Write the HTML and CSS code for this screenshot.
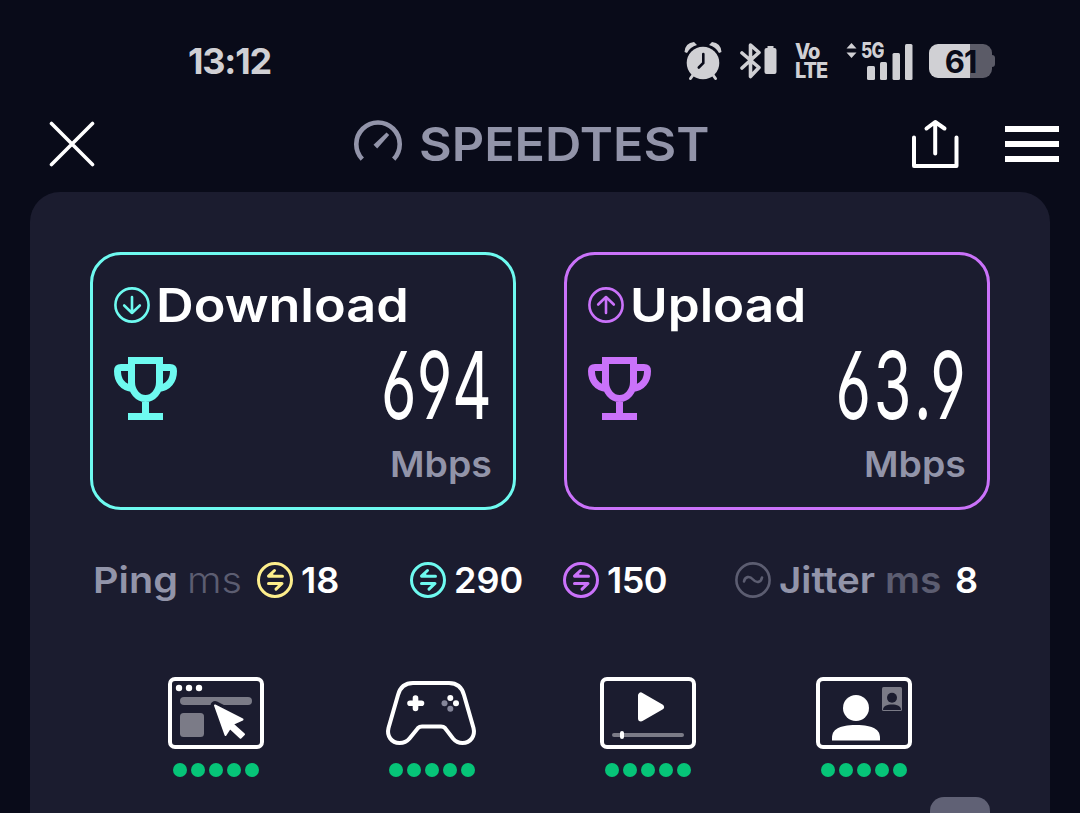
FILE: index.html
```
<!DOCTYPE html>
<html lang="en">
<head>
    <meta charset="UTF-8">
    <meta name="viewport" content="width=device-width, initial-scale=1.0">
    <title>Speedtest</title>
    <link rel="stylesheet" href="styles.css">
</head>
<body>
    <!-- shared icons -->
    <svg class="defs" width="0" height="0">
        <symbol id="trophy" viewBox="0 0 63 63">
            <path fill="none" stroke="currentColor" stroke-width="7" d="M17.500 3.500h28V25a14 16.500 0 0 1-28 0zM17.500 10.500H7c-2.500 0-3.500 1-3.500 3.500 0 9.500 5 16 14.500 17.500M45.500 10.500H56c2.500 0 3.500 1 3.500 3.500 0 9.500-5 16-14.500 17.500M31.500 41v16M14 59.500h35"/>
        </symbol>
        <symbol id="latency" viewBox="0 0 36 36">
            <g fill="none" stroke="currentColor" stroke-width="3" stroke-linecap="round" stroke-linejoin="round">
                <circle cx="18" cy="18" r="16.500"/>
                <path d="M17.500 8.500l-6 5.700h14M11.500 21.500H25l-6 5.700"/>
                <path d="M15 12l-2.500 2h4zM22 24l2.500-2.300h-4z" stroke-width="1.500"/>
            </g>
        </symbol>
    </svg>

    <div class="status-bar">
        <div class="time"><span>13:12</span></div>
        <svg class="alarm" width="38" height="40" viewBox="0 0 38 40">
            <circle cx="19" cy="22" r="16.300" fill="#d0d0d4"/>
            <path d="M0.500 11Q1 2 10 1l3 3Q6 6 3 12zM37.500 11Q37 2 28 1l-3 3Q32 6 35 12z" fill="#d0d0d4"/>
            <path d="M9 34l-2.500 3.500M29 34l2.500 3.500" stroke="#d0d0d4" stroke-width="3" stroke-linecap="round"/>
            <path d="M19.300 13v9l-4.500 4.500" stroke="#090b19" stroke-width="2.600" stroke-linecap="round" fill="none"/>
        </svg>
        <svg class="bluetooth" width="38" height="38" viewBox="0 0 38 38">
            <path d="M2 11l17 14.500-8.500 9V3l8.500 7.500L2 26" stroke="#d0d0d4" stroke-width="3.600" stroke-linejoin="round" stroke-linecap="round" fill="none"/>
            <path d="M27.500 4h6v2h1a2 2 0 0 1 2 2v22a2 2 0 0 1-2 2h-8a2 2 0 0 1-2-2V8a2 2 0 0 1 2-2h1z" fill="#d0d0d4"/>
        </svg>
        <div class="volte"><span>Vo</span><span>LTE</span></div>
        <div class="signal">
            <svg width="68" height="38" viewBox="0 0 68 38" fill="#d0d0d4">
                <path d="M5.500 1l5 5.500h-10zM5.500 16l5-5.500h-10z"/>
                <rect x="21" y="24" width="8" height="14" rx="1.500"/>
                <rect x="34" y="20" width="7" height="18" rx="1.500"/>
                <rect x="46.500" y="11" width="7.500" height="27" rx="1.500"/>
                <rect x="59" y="2" width="7.500" height="36" rx="1.500"/>
            </svg>
            <span class="network">5G</span>
        </div>
        <div class="battery">
            <div class="battery-body"><span>61</span></div>
            <div class="battery-tip"></div>
        </div>
    </div>

    <div class="header">
        <svg class="close" width="46" height="46" viewBox="0 0 46 46">
            <path d="M2.500 2.500l41 41M43.500 2.500l-41 41" stroke="#fff" stroke-width="3.600" stroke-linecap="round"/>
        </svg>
        <div class="brand">
            <svg width="48" height="48" viewBox="0 0 48 48">
                <path d="M8.300 39.200a21.700 21.700 0 1 1 31.400 0" fill="none" stroke="#9294a9" stroke-width="4.600"/>
                <path d="M32.500 12.500l2.700 2.600-12 13.400-3.700-3.700z" fill="#9294a9"/>
            </svg>
            <span>SPEEDTEST</span>
        </div>
        <svg class="share" width="48" height="50" viewBox="0 0 48 50">
            <path d="M2 18.500V47h42.500V18.500M23.200 34.500V3.500M14.500 9.500l8.700-6.500L32.500 9.500" fill="none" stroke="#fff" stroke-width="4" stroke-linecap="round" stroke-linejoin="round"/>
        </svg>
        <div class="menu"><i></i><i></i><i></i></div>
    </div>

    <div class="panel">
        <div class="cards">
            <div class="card download">
                <div class="card-title">
                    <svg width="36" height="36" viewBox="0 0 36 36" fill="none" stroke="currentColor" stroke-width="2.600" stroke-linecap="round" stroke-linejoin="round">
                        <circle cx="18" cy="18" r="16.600"/>
                        <path d="M18 10v16M10.200 18.500L18 26l7.800-7.500"/>
                    </svg>
                    <span>Download</span>
                </div>
                <div class="card-value">
                    <svg width="63" height="63"><use href="#trophy"/></svg>
                    <span class="speed">694</span>
                </div>
                <div class="unit"><span>Mbps</span></div>
            </div>
            <div class="card upload">
                <div class="card-title">
                    <svg width="36" height="36" viewBox="0 0 36 36" fill="none" stroke="currentColor" stroke-width="2.600" stroke-linecap="round" stroke-linejoin="round">
                        <circle cx="18" cy="18" r="16.600"/>
                        <path d="M18 26V10M10.200 17.500L18 10l7.800 7.500"/>
                    </svg>
                    <span>Upload</span>
                </div>
                <div class="card-value">
                    <svg width="63" height="63"><use href="#trophy"/></svg>
                    <span class="speed">63<span class="point">.</span>9</span>
                </div>
                <div class="unit"><span>Mbps</span></div>
            </div>
        </div>

        <div class="latency">
            <div class="metric ping">
                <span class="label">Ping</span>
                <span class="ms light">ms</span>
                <svg class="yellow" width="36" height="36"><use href="#latency"/></svg>
                <b>18</b>
            </div>
            <div class="metric down">
                <svg class="cyan" width="36" height="36"><use href="#latency"/></svg>
                <b>290</b>
            </div>
            <div class="metric up">
                <svg class="purple" width="36" height="36"><use href="#latency"/></svg>
                <b>150</b>
            </div>
            <div class="metric jitter">
                <svg width="36" height="36" viewBox="0 0 36 36" fill="none" stroke="#5c5d71" stroke-width="2.600" stroke-linecap="round">
                    <circle cx="18" cy="18" r="16.600"/>
                    <path d="M9 19.500c1-5 5.500-6 9-2s8 3 9-2"/>
                </svg>
                <span class="label">Jitter</span>
                <span class="ms">ms</span>
                <b>8</b>
            </div>
        </div>

        <div class="usage">
            <div class="usage-item">
                <svg width="96" height="72" viewBox="0 0 96 72">
                    <rect x="2" y="2" width="92" height="68" rx="5" fill="none" stroke="#fff" stroke-width="4"/>
                    <g fill="#fff"><circle cx="11" cy="11" r="3.200"/><circle cx="21" cy="11" r="3.200"/><circle cx="31" cy="11" r="3.200"/></g>
                    <rect x="12" y="20" width="72" height="8" rx="4" fill="#7b7b87"/>
                    <rect x="12" y="36" width="24" height="24" rx="3.500" fill="#7b7b87"/>
                    <path d="M47 28.500L74.500 42.500l-10 4.500L62 51l-4.500 7z" fill="#1b1c2f" stroke="#1b1c2f" stroke-width="9" stroke-linejoin="round"/>
                    <path d="M47 28.500L74.500 42.500l-10 4.500L76 57.300l-3.500 3.500L62 51l-4.500 7z" fill="#fff" stroke="#fff" stroke-width="2" stroke-linejoin="round"/>
                </svg>
                <div class="dots"><i></i><i></i><i></i><i></i><i></i></div>
            </div>
            <div class="usage-item">
                <svg width="96" height="72" viewBox="0 0 96 72">
                    <path d="M29 6h36c8 0 13 4.500 15 12l9.500 33c2 8-3 15-11 15-4 0-7-1.500-9.500-4.500l-8-10.500c-1-1-2-1.500-4-1.500H38c-2 0-3 .5-4 1.500L25.500 61.500C23 64.500 19.500 66 15.500 66 7.500 66 2.500 59 4.500 51L14 18C16 10.500 21 6 29 6z" fill="none" stroke="#fff" stroke-width="4"/>
                    <path d="M31.500 21v10.500M26 26.300h11.500" stroke="#fff" stroke-width="5.600" stroke-linecap="round"/>
                    <circle cx="66.300" cy="21" r="3" fill="#fff"/>
                    <circle cx="72" cy="26.300" r="3" fill="#fff"/>
                    <circle cx="60.500" cy="26.300" r="3" fill="#85869a"/>
                    <circle cx="66.300" cy="31.700" r="3" fill="#85869a"/>
                </svg>
                <div class="dots"><i></i><i></i><i></i><i></i><i></i></div>
            </div>
            <div class="usage-item">
                <svg width="96" height="72" viewBox="0 0 96 72">
                    <rect x="2" y="2" width="92" height="68" rx="5" fill="none" stroke="#fff" stroke-width="4"/>
                    <path d="M41 18.500v23L61 30z" fill="#fff" stroke="#fff" stroke-width="6" stroke-linejoin="round"/>
                    <rect x="12" y="56" width="72" height="4" rx="2" fill="#7b7b87"/>
                    <rect x="20" y="54" width="4" height="8" rx="2" fill="#fff"/>
                </svg>
                <div class="dots"><i></i><i></i><i></i><i></i><i></i></div>
            </div>
            <div class="usage-item">
                <svg width="96" height="72" viewBox="0 0 96 72">
                    <rect x="2" y="2" width="92" height="68" rx="5" fill="none" stroke="#fff" stroke-width="4"/>
                    <circle cx="40" cy="31" r="13" fill="#fff"/>
                    <path d="M16 63.500V61c0-8 6-13 24-13s24 5 24 13v2.500z" fill="#fff"/>
                    <rect x="66" y="10" width="20" height="24" rx="1.500" fill="#7b7b87"/>
                    <circle cx="76" cy="20.800" r="5" fill="#1b1c2f"/>
                    <path d="M67 33c0-4 4-5.500 9-5.500s9 1.500 9 5.500z" fill="#1b1c2f"/>
                </svg>
                <div class="dots"><i></i><i></i><i></i><i></i><i></i></div>
            </div>
        </div>

        <div class="drawer-tab"></div>
    </div>
</body>
</html>
```
FILE: styles.css
```
* {
    box-sizing: border-box;
}

body {
    margin: 0;
    height: 813px;
    overflow: hidden;
    background-color: #090b19;
    color: #fff;
    font-family: Inter, 'Open Sans', sans-serif;
    display: flex;
    flex-direction: column;
}

svg {
    display: block;
    flex: none;
}

.defs {
    position: absolute;
}

/* Status bar */
.status-bar {
    height: 96px;
    padding: 26px 85px 0 188px;
    display: flex;
    align-items: center;
    flex: none;
    color: #d0d0d4;
}

.time {
    width: 496px;
    font-size: 36px;
    font-weight: 700;
    line-height: 42px;
    letter-spacing: -1.2px;
}

.bluetooth {
    margin-left: 18px;
}

.volte {
    width: 34px;
    margin-left: 17px;
    display: flex;
    flex-direction: column;
    font-size: 21px;
    font-weight: 800;
    line-height: 19px;
    letter-spacing: -1px;
}

.volte span {
    transform: scaleX(0.95);
    transform-origin: left;
}

.signal {
    position: relative;
    margin-left: 17px;
}

.network {
    position: absolute;
    left: 15px;
    top: 0;
    font-size: 21px;
    font-weight: 800;
    line-height: 17px;
    letter-spacing: -1px;
    transform: scaleX(0.82);
    transform-origin: left;
}

.battery {
    display: flex;
    align-items: center;
    margin-left: 15px;
}

.battery-body {
    width: 63px;
    height: 34px;
    border-radius: 9px;
    background: linear-gradient(90deg, #d0d0d4 41px, #5b5b67 41px);
    color: #090b19;
    font-size: 31px;
    font-weight: 700;
    line-height: 35px;
    text-align: center;
    letter-spacing: -1px;
}

.battery-tip {
    width: 3px;
    height: 12px;
    border-radius: 0 3px 3px 0;
    background-color: #5b5b67;
}

/* Header */
.header {
    height: 96px;
    padding: 0 21px 0 49px;
    display: flex;
    align-items: center;
    flex: none;
}

.brand {
    width: 558px;
    margin-left: 259px;
    display: flex;
    align-items: center;
    gap: 17px;
    color: #9294a9;
    font-size: 47px;
    font-weight: 600;
}

.brand span {
    padding-bottom: 1px;
    transform: scaleX(1.07);
    transform-origin: left;
}

.menu {
    margin-left: 45px;
    display: flex;
    flex-direction: column;
    gap: 9px;
}

.menu i {
    width: 54px;
    height: 6px;
    background-color: #fff;
}

/* Results panel */
.panel {
    position: relative;
    flex: 1;
    margin: 0 30px;
    padding: 60px 60px 0;
    border-radius: 30px 30px 0 0;
    background-color: #1b1c2f;
}

.cards {
    display: grid;
    grid-template-columns: 1fr 1fr;
    gap: 48px;
}

.card {
    height: 258px;
    padding: 20px 21px 0;
    border: 3px solid;
    border-radius: 31px;
}

.download, .cyan {
    color: #6efaf0;
}

.upload, .purple {
    color: #ca72fa;
}

.yellow {
    color: #fdee8c;
}

.card-title {
    height: 60px;
    display: flex;
    align-items: center;
    gap: 6px;
}

.card-title span {
    color: #fff;
    font-size: 47px;
    font-weight: 600;
    line-height: 58px;
    transform: scaleX(1.11);
    transform-origin: left;
}

.upload .card-title span {
    transform: scaleX(1.09);
}

.card-value {
    height: 106px;
    display: flex;
    align-items: center;
    justify-content: space-between;
}

.speed {
    margin-right: -2px;
    padding-bottom: 5px;
    color: #fff;
    font-size: 94px;
    font-weight: 400;
    line-height: 101px;
    letter-spacing: 4px;
    transform: scaleX(0.65);
    transform-origin: right;
    font-feature-settings: 'cv03', 'cv04';
}

.point {
    letter-spacing: -2px;
}

.unit {
    display: flex;
    justify-content: flex-end;
    color: #9294a9;
    font-size: 36px;
    font-weight: 600;
    line-height: 47px;
}

.unit span {
    transform: scaleX(1.04);
    transform-origin: right;
}

/* Ping and jitter */
.latency {
    height: 140px;
    display: flex;
    align-items: center;
    font-size: 36px;
    font-weight: 600;
}

.metric {
    display: flex;
    align-items: center;
}

.metric span {
    transform: scaleX(1.1);
    transform-origin: left;
}

.metric b {
    font-weight: 600;
}

.metric svg + b {
    margin-left: 8px;
}

.ping {
    width: 316px;
    padding-left: 3px;
}

.ping .label {
    width: 94px;
}

.ping .ms {
    width: 70px;
}

.down {
    width: 153px;
    margin-left: 4px;
}

.up {
    width: 172px;
}

.up b {
    letter-spacing: -0.5px;
}

.label {
    color: #9294a9;
}

.jitter .label {
    width: 106px;
    margin-left: 8px;
    transform: scaleX(1.07);
}

.jitter .ms {
    width: 70px;
    transform: scaleX(1.08);
}

.ms {
    color: #5c5d71;
}

.metric .light {
    font-weight: 300;
}

/* Usage quality */
.usage {
    margin: 27px 18px 0;
    display: grid;
    grid-template-columns: repeat(4, 1fr);
}

.usage-item {
    display: flex;
    flex-direction: column;
    align-items: center;
    gap: 14px;
}

.dots {
    display: flex;
    gap: 4.100px;
}

.dots i {
    width: 14px;
    height: 14px;
    border-radius: 50%;
    background-color: #06c478;
}

.drawer-tab {
    position: absolute;
    right: 60px;
    bottom: 0;
    width: 60px;
    height: 16px;
    border-radius: 14px 14px 0 0;
    background-color: #606175;
}
```
